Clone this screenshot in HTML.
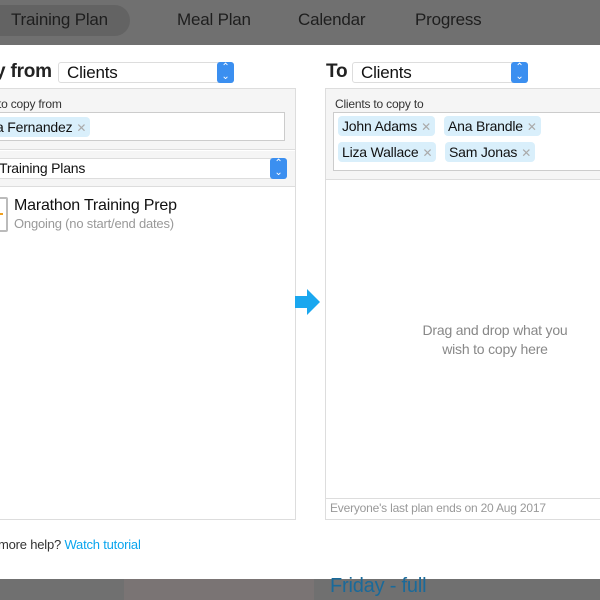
<!DOCTYPE html>
<html><head><style>
*{margin:0;padding:0;box-sizing:border-box}
body{width:600px;height:600px;overflow:hidden;position:relative;font-family:"Liberation Sans",Arial,Helvetica,sans-serif;background:#fff;color:#222;letter-spacing:-0.2px}
.abs{position:absolute}
.top{left:0;top:0;width:600px;height:45px;background:#707070}
.nav{font-size:17px;color:#1e1e1e;top:10px}
.pill{left:-20px;top:5px;width:150px;height:31px;border-radius:16px;background:#636363}
.sel{height:21px;border:1px solid #ddd;border-radius:3px;background:#fff;font-size:17px;line-height:19px;padding-left:8px;color:#111}
.sel .btn{position:absolute;right:-1px;top:-1px;width:17px;height:21px;background:#3b8ff0;border-radius:3px;color:#fff;font-size:10px;line-height:9px;text-align:center;padding-top:1px}
.tag{position:absolute;height:20px;background:#d9effb;border-radius:4px;font-size:14px;line-height:20px;padding:0 4px;color:#111}
.tag i{font-style:normal;color:#aaa;font-size:12px;margin-left:4px}
.lbl{font-size:12px;color:#333}
</style></head><body>
<div class="abs top"></div>
<div class="abs pill"></div>
<div class="abs nav" style="left:11px">Training Plan</div>
<div class="abs nav" style="left:177px">Meal Plan</div>
<div class="abs nav" style="left:298px">Calendar</div>
<div class="abs nav" style="left:415px">Progress</div>

<div class="abs" style="left:-5px;top:61px;font-size:19px;font-weight:bold;color:#222">y from</div>
<div class="abs sel" style="left:58px;top:62px;width:176px">Clients<div class="btn">⌃<br>⌄</div></div>
<div class="abs" style="left:326px;top:61px;font-size:19px;font-weight:bold;color:#222">To</div>
<div class="abs sel" style="left:352px;top:62px;width:176px">Clients<div class="btn">⌃<br>⌄</div></div>

<div class="abs" style="left:-2px;top:88px;width:298px;height:432px;border:1px solid #ddd;background:#fff"></div>
<div class="abs" style="left:-1px;top:89px;width:296px;height:61px;background:#f5f5f5;border-bottom:1px solid #ddd"></div>
<div class="abs lbl" style="left:-2px;top:97px">to copy from</div>
<div class="abs" style="left:-5px;top:112px;width:290px;height:29px;border:1px solid #ccc;background:#fff"></div>
<div class="tag" style="left:-8px;top:117px;height:20px">a Fernandez<i>✕</i></div>
<div class="abs" style="left:-1px;top:151px;width:296px;height:36px;background:#f5f5f5;border-bottom:1px solid #ddd"></div>
<div class="abs sel" style="left:-10px;top:158px;width:297px;font-size:14px;line-height:19px">Training Plans<div class="btn">⌃<br>⌄</div></div>
<div class="abs" style="left:-4px;top:197px;width:12px;height:35px;border:2px solid #bbb;border-radius:2px;background:#fff"></div>
<div class="abs" style="left:-1px;top:213px;width:4px;height:2px;background:#f0a020"></div>
<div class="abs" style="left:14px;top:197px;font-size:16px;color:#111">Marathon Training Prep</div>
<div class="abs" style="left:14px;top:216px;font-size:13px;color:#999">Ongoing (no start/end dates)</div>

<svg class="abs" style="left:294px;top:288px" width="28" height="28"><path d="M1 8H13V1L26 14L13 27V20H1Z" fill="#1aa7ef"/></svg>

<div class="abs" style="left:325px;top:88px;width:290px;height:432px;border:1px solid #ddd;background:#fff"></div>
<div class="abs" style="left:326px;top:89px;width:290px;height:91px;background:#f5f5f5;border-bottom:1px solid #ddd"></div>
<div class="abs lbl" style="left:335px;top:97px">Clients to copy to</div>
<div class="abs" style="left:333px;top:112px;width:290px;height:59px;border:1px solid #ccc;background:#fff"></div>
<div class="tag" style="left:338px;top:116px">John Adams<i>✕</i></div>
<div class="tag" style="left:444px;top:116px">Ana Brandle<i>✕</i></div>
<div class="tag" style="left:338px;top:142px">Liza Wallace<i>✕</i></div>
<div class="tag" style="left:445px;top:142px">Sam Jonas<i>✕</i></div>
<div class="abs" style="left:410px;top:321px;width:170px;text-align:center;font-size:14px;line-height:19px;color:#888">Drag and drop what you wish to copy here</div>
<div class="abs" style="left:326px;top:498px;width:290px;height:1px;background:#ddd"></div>
<div class="abs" style="left:330px;top:501px;font-size:12px;color:#999">Everyone's last plan ends on 20 Aug 2017</div>

<div class="abs" style="left:-2px;top:537px;font-size:13px;color:#333">more help? <span style="color:#0aa5ee">Watch tutorial</span></div>

<div class="abs" style="left:0;top:579px;width:600px;height:21px;background:#707070"></div>
<div class="abs" style="left:124px;top:579px;width:190px;height:21px;background:#7a7474"></div>
<div class="abs" style="left:330px;top:575px;font-size:20px;color:#1a6a9a">Friday - full</div>
</body></html>
